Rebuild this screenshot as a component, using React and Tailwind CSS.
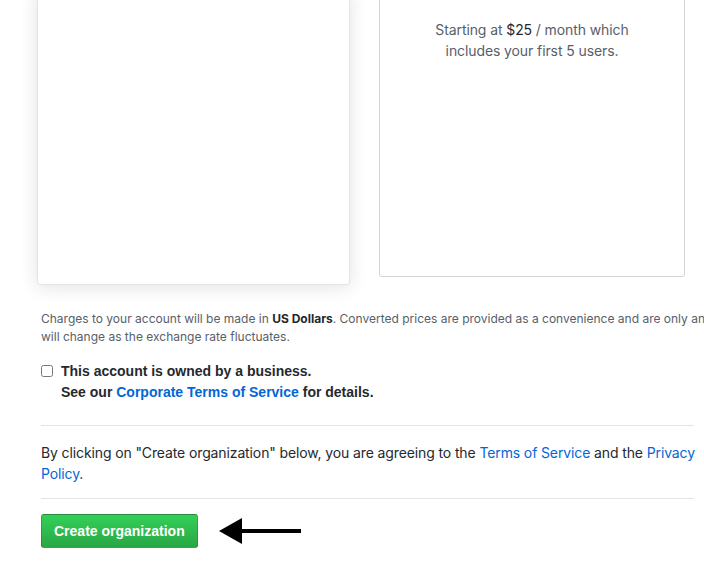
import React from 'react';

const sans = { fontFamily: 'Inter, "Liberation Sans", Arial, sans-serif' };
const bold = { fontFamily: '"Liberation Sans", Arial, sans-serif' };

const App = () => {
  return (
    <div className="w-[704px] h-[586px] overflow-hidden bg-white text-[#24292e]" style={sans}>
      <div className="pl-[37px]">
        {/* plan cards, tops run off the page */}
        <div className="flex items-start gap-[29px] -mt-[10px]">
          <div className="w-[313px] h-[295px] bg-white border border-[#e1e4e8] rounded-[3px] shadow-[0_2px_18px_rgba(27,31,35,0.13)]"></div>
          <div className="w-[306px] h-[287px] bg-white border border-[#d1d5da] rounded-[3px] flex flex-col items-center pt-[28px]">
            <p className="text-[14px] leading-[21px] tracking-[-0.1px] text-[#586069] text-center">
              Starting at <span className="text-[#24292e]">$25</span> / month which
              <br />
              includes your first 5 users.
            </p>
          </div>
        </div>
      </div>

      <div className="pl-[41px] pr-[6px]">
        <p className="mt-[25px] text-[12px] leading-[18px] text-[#586069] whitespace-nowrap">
          Charges to your account will be made in <strong className="font-bold text-[#24292e]">US Dollars</strong>. Converted prices are provided as a convenience and are only an estimate based on current exchange rates. Local prices
          <br />
          will change as the exchange rate fluctuates.
        </p>

        <label className="mt-[15px] flex items-start gap-[8px] text-[14px] leading-[21px] font-bold" style={bold}>
          <input type="checkbox" className="mt-[4px] w-[12px] h-[12px] accent-[#0366d6]" />
          <span>
            This account is owned by a business.
            <br />
            See our <a className="text-[#0366d6] font-bold" href="#">Corporate Terms of Service</a> for details.
          </span>
        </label>

        <div className="mt-[22px] mr-[4px] border-t border-[#e1e4e8]"></div>

        <p className="mt-[16px] text-[14px] leading-[21px] tracking-[-0.12px]">
          By clicking on "Create organization" below, you are agreeing to the{' '}
          <a className="text-[#0366d6]" href="#">Terms of Service</a> and the{' '}
          <a className="text-[#0366d6]" href="#">Privacy Policy</a>.
        </p>

        <div className="mt-[14px] mr-[4px] border-t border-[#e1e4e8]"></div>

        <div className="mt-[15px] flex items-center gap-[21px]" style={bold}>
          <button className="h-[34px] px-[12px] rounded-[3px] border border-[rgba(27,31,35,0.2)] bg-gradient-to-b from-[#34d058] to-[#28a745] text-white text-[14px] font-bold">
            Create organization
          </button>
          <svg width="84" height="28" viewBox="0 0 84 28">
            <rect x="20" y="12" width="62" height="4" fill="#000" />
            <polygon points="0,14 23,1 23,27" fill="#000" />
          </svg>
        </div>
      </div>
    </div>
  );
};

export default App;
